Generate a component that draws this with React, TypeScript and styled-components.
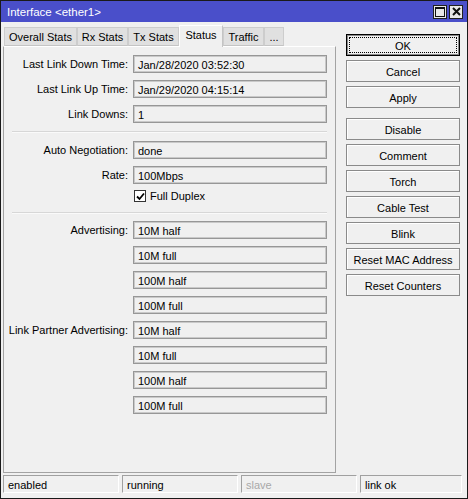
import React from "react";
import styled, { createGlobalStyle } from "styled-components";

const Global = createGlobalStyle`
  html, body { margin: 0; padding: 0; background: #f0f0f0; }
  body { font-family: "Liberation Sans", Arial, sans-serif; font-size: 11px; color: #000; }
  * { box-sizing: border-box; }
`;

const Window = styled.div`
  width: 468px;
  height: 499px;
  border: 1px solid #1a1a1a;
  background: #f0f0f0;
  display: flex;
  flex-direction: column;
`;

const TitleBar = styled.div`
  height: 21px;
  background: #4a4fca;
  display: flex;
  align-items: center;
  padding: 0 4px 0 6px;
  color: #fff;
  font-size: 11.5px;
`;

const TitleText = styled.div`
  flex: 1;
  padding-top: 1px;
`;

const TitleButtons = styled.div`
  display: flex;
  gap: 2px;
`;

const TitleBtn = styled.div`
  width: 14px;
  height: 14px;
  background: #e8e8e8;
  border: 1px solid #202020;
  display: flex;
  align-items: center;
  justify-content: center;
`;

const Body = styled.div`
  display: flex;
  margin-top: 2px;
  padding-left: 2px;
`;

const LeftCol = styled.div`
  width: 333px;
  display: flex;
  flex-direction: column;
`;

const TabStrip = styled.div`
  height: 22px;
  display: flex;
  align-items: flex-end;
  padding-left: 1px;
`;

const Tab = styled.div<{ $active?: boolean; $w: number }>`
  width: ${(p) => p.$w}px;
  height: ${(p) => (p.$active ? 22 : 19)}px;
  margin-bottom: ${(p) => (p.$active ? -1 : 0)}px;
  position: relative;
  z-index: ${(p) => (p.$active ? 2 : 1)};
  background: ${(p) => (p.$active ? "#f0f0f0" : "#e0e0e0")};
  border: 1px solid ${(p) => (p.$active ? "#c4c4c4" : "#cdcdcd")};
  border-bottom: ${(p) => (p.$active ? "none" : "1px solid #c4c4c4")};
  border-left-color: ${(p) => (p.$active ? "#fff" : "#cdcdcd")};
  border-top-color: ${(p) => (p.$active ? "#fff" : "#cdcdcd")};
  display: flex;
  align-items: center;
  justify-content: center;
  padding-bottom: ${(p) => (p.$active ? 3 : 0)}px;
  white-space: nowrap;
`;

const Panel = styled.div`
  height: 427px;
  border: 1px solid #a3a3a3;
  border-top-color: #fff;
  border-left-color: #a3a3a3;
  padding-top: 8px;
  display: flex;
  flex-direction: column;
`;

const FieldRow = styled.div<{ $gap?: number }>`
  display: grid;
  grid-template-columns: 124px 194px;
  column-gap: 5px;
  align-items: center;
  height: 18px;
  margin-bottom: ${(p) => p.$gap ?? 7}px;
`;

const Label = styled.div`
  text-align: right;
  white-space: nowrap;
`;

const Field = styled.div`
  height: 18px;
  border: 1px solid #979797;
  box-shadow: inset 0 0 0 1px #c9c9c9;
  background: #f0f0f0;
  padding: 0 4px;
  display: flex;
  align-items: center;
  padding-top: 1px;
  white-space: nowrap;
`;

const Separator = styled.div<{ $before: number; $after: number }>`
  height: 2px;
  margin: ${(p) => p.$before}px 8px ${(p) => p.$after}px 8px;
  border-top: 1px solid #d7d7d7;
  border-bottom: 1px solid #fafafa;
`;

const CheckRow = styled.div`
  display: flex;
  align-items: center;
  height: 12px;
  padding-left: 130px;
  gap: 4px;
`;

const CheckBox = styled.div`
  width: 12px;
  height: 12px;
  border: 1px solid #333;
  background: #fff;
  display: flex;
  align-items: center;
  justify-content: center;
`;

const RightCol = styled.div`
  margin-left: 10px;
  padding-top: 10px;
  width: 114px;
  display: flex;
  flex-direction: column;
`;

const Button = styled.div<{ $default?: boolean; $gapAfter?: number }>`
  height: 22px;
  margin-bottom: ${(p) => p.$gapAfter ?? 4}px;
  border: 1px solid ${(p) => (p.$default ? "#000" : "#8a8a8a")};
  background: #f0f0f0;
  box-shadow: ${(p) =>
    p.$default ? "inset 0 0 0 1px #8a8a8a" : "inset 1px 1px 0 #fff"};
  display: flex;
  align-items: center;
  justify-content: center;
  position: relative;
  white-space: nowrap;
  padding-top: 1px;
`;

const FocusRect = styled.div`
  position: absolute;
  inset: 2px;
  border: 1px dotted #000;
`;

const StatusBar = styled.div`
  margin-top: 2px;
  padding-left: 2px;
  display: grid;
  grid-template-columns: 116px 116px 116px 102px;
  column-gap: 3px;
  height: 18px;
`;

const StatusCell = styled.div<{ $dim?: boolean }>`
  border-top: 1px solid #a0a0a0;
  border-left: 1px solid #a0a0a0;
  border-right: 1px solid #fff;
  border-bottom: 1px solid #fff;
  padding: 1px 0 0 4px;
  display: flex;
  align-items: center;
  color: ${(p) => (p.$dim ? "#a8a8a8" : "#000")};
`;

const tabs: [string, number][] = [
  ["Overall Stats", 73],
  ["Rx Stats", 51],
  ["Tx Stats", 51],
  ["Status", 44],
  ["Traffic", 41],
  ["...", 20],
];

const adv = ["10M half", "10M full", "100M half", "100M full"];

export default function App() {
  return (
    <>
      <Global />
      <Window>
        <TitleBar>
          <TitleText>Interface &lt;ether1&gt;</TitleText>
          <TitleButtons>
            <TitleBtn>
              <svg width="10" height="10" viewBox="0 0 10 10">
                <rect x="0.5" y="0.5" width="9" height="9" fill="none" stroke="#111" strokeWidth="1" />
                <rect x="0" y="0" width="10" height="2" fill="#111" />
              </svg>
            </TitleBtn>
            <TitleBtn>
              <svg width="9" height="9" viewBox="0 0 9 9">
                <path d="M1 1 L8 8 M8 1 L1 8" stroke="#111" strokeWidth="2" />
              </svg>
            </TitleBtn>
          </TitleButtons>
        </TitleBar>
        <Body>
          <LeftCol>
            <TabStrip>
              {tabs.map(([t, w]) => (
                <Tab key={t} $w={w} $active={t === "Status"}>
                  {t}
                </Tab>
              ))}
            </TabStrip>
            <Panel>
              <FieldRow>
                <Label>Last Link Down Time:</Label>
                <Field>Jan/28/2020 03:52:30</Field>
              </FieldRow>
              <FieldRow>
                <Label>Last Link Up Time:</Label>
                <Field>Jan/29/2020 04:15:14</Field>
              </FieldRow>
              <FieldRow $gap={0}>
                <Label>Link Downs:</Label>
                <Field>1</Field>
              </FieldRow>
              <Separator $before={8} $after={8} />
              <FieldRow>
                <Label>Auto Negotiation:</Label>
                <Field>done</Field>
              </FieldRow>
              <FieldRow $gap={6}>
                <Label>Rate:</Label>
                <Field>100Mbps</Field>
              </FieldRow>
              <CheckRow>
                <CheckBox>
                  <svg width="9" height="9" viewBox="0 0 9 9">
                    <path d="M1 4.5 L3.5 7 L8 1.5" fill="none" stroke="#000" strokeWidth="1.8" />
                  </svg>
                </CheckBox>
                <span>Full Duplex</span>
              </CheckRow>
              <Separator $before={10} $after={7} />
              {adv.map((a, i) => (
                <FieldRow key={"a" + i}>
                  <Label>{i === 0 ? "Advertising:" : ""}</Label>
                  <Field>{a}</Field>
                </FieldRow>
              ))}
              {adv.map((a, i) => (
                <FieldRow key={"p" + i}>
                  <Label>{i === 0 ? "Link Partner Advertising:" : ""}</Label>
                  <Field>{a}</Field>
                </FieldRow>
              ))}
            </Panel>
          </LeftCol>
          <RightCol>
            <Button $default>
              <FocusRect />
              OK
            </Button>
            <Button>Cancel</Button>
            <Button $gapAfter={10}>Apply</Button>
            <Button>Disable</Button>
            <Button>Comment</Button>
            <Button>Torch</Button>
            <Button>Cable Test</Button>
            <Button>Blink</Button>
            <Button>Reset MAC Address</Button>
            <Button>Reset Counters</Button>
          </RightCol>
        </Body>
        <StatusBar>
          <StatusCell>enabled</StatusCell>
          <StatusCell>running</StatusCell>
          <StatusCell $dim>slave</StatusCell>
          <StatusCell>link ok</StatusCell>
        </StatusBar>
      </Window>
    </>
  );
}
